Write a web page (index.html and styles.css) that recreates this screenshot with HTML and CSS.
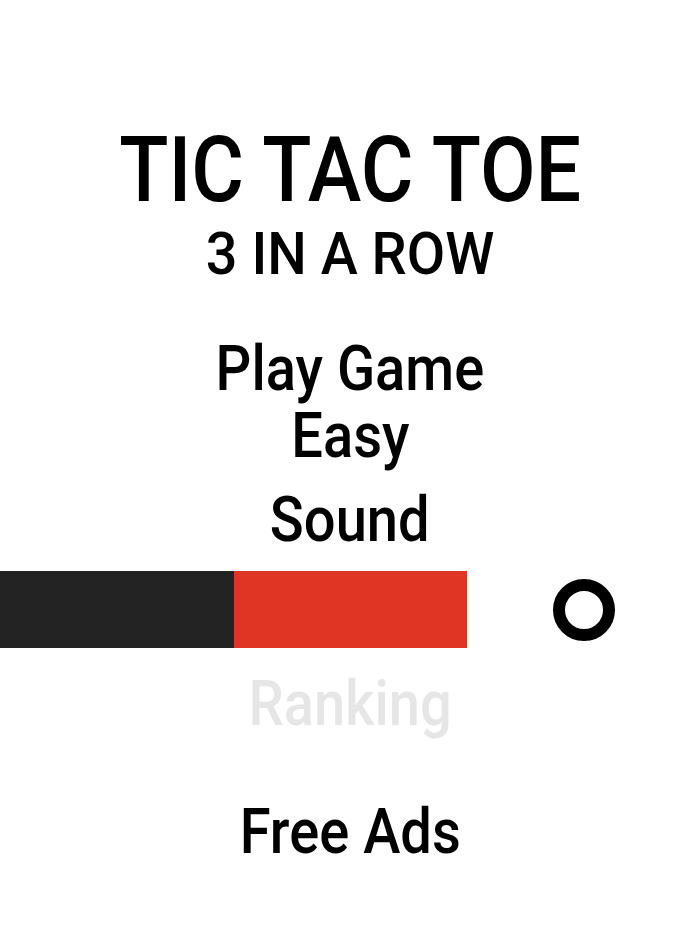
FILE: index.html
```html
<!DOCTYPE html>
<html>
<head>
<meta charset="utf-8">
<link rel="stylesheet" href="styles.css">
</head>
<body>
<main class="menu">
  <h1 class="title">TIC TAC TOE</h1>
  <div class="subtitle">3 IN A ROW</div>
  <div class="item play">Play Game</div>
  <div class="item easy">Easy</div>
  <div class="item sound">Sound</div>
  <div class="bar">
    <div class="seg dark"></div>
    <div class="seg red"></div>
    <div class="seg mark"><span class="ring"></span></div>
  </div>
  <div class="item ranking">Ranking</div>
  <div class="item ads">Free Ads</div>
</main>
</body>
</html>
```
FILE: styles.css
```css
html, body {
  margin: 0;
  padding: 0;
  background: #ffffff;
}
.menu {
  display: flex;
  flex-direction: column;
  align-items: center;
  font-family: Roboto, "Liberation Sans", sans-serif;
  color: #000;
  width: 700px;
}
.title {
  margin: 125px 0 0;
  font-size: 91px;
  line-height: 91px;
  font-weight: 500;
  transform: scaleX(0.888);
}
.subtitle {
  margin-top: 8px;
  font-size: 60px;
  line-height: 60px;
  font-weight: 500;
  transform: scaleX(0.93);
}
.item {
  font-size: 63px;
  line-height: 63px;
  font-weight: 500;
  transform: scaleX(0.89);
}
.play { margin-top: 53px; }
.easy { margin-top: 4px; }
.sound { margin-top: 21px; }
.bar {
  margin-top: 20px;
  align-self: stretch;
  display: grid;
  grid-template-columns: 234px 233px 1fr;
  height: 77px;
}
.dark { background: #232323; }
.red { background: #e03524; }
.mark {
  display: flex;
  align-items: center;
  justify-content: center;
}
.ring {
  width: 38px;
  height: 38px;
  border: 12px solid #000;
  border-radius: 50%;
}
.ranking {
  margin-top: 24px;
  color: #e6e6e6;
}
.ads { margin-top: 65px; }
```
